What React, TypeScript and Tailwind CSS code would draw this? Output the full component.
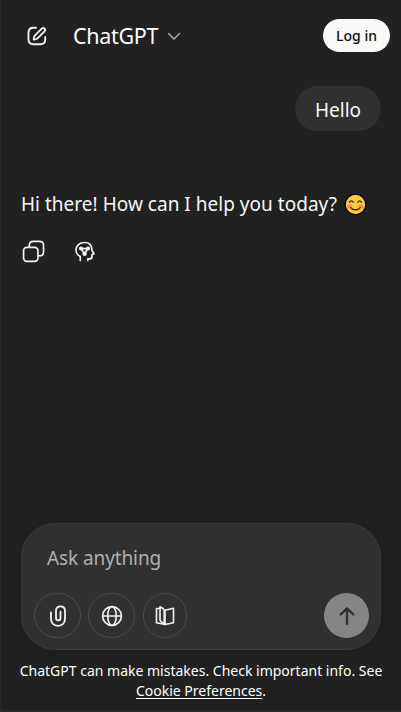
import type { ReactNode } from "react";

function Icon({ children, className, width = 1.6, box = "0 0 24 24" }: { children: ReactNode; className: string; width?: number; box?: string }) {
  return (
    <svg viewBox={box} className={className} fill="none" stroke="currentColor" strokeWidth={width} strokeLinecap="round" strokeLinejoin="round">
      {children}
    </svg>
  );
}

function Header() {
  return (
    <header className="flex h-[71px] items-center pl-[25px] pr-[11px]">
      <button className="text-[#f3f3f3]" aria-label="New chat">
        <Icon className="block size-[22px]" width={2}>
          <path d="M11 3H8.2C5 3 2.700 5 2.700 8.400v7.200C2.700 19 5 21 8.200 21h7.600c3.200 0 5.200-2 5.200-5.200V13" />
          <path d="M9.500 11.600 17.200 3.900a2.100 2.100 0 0 1 3 3l-7.700 7.600c-.9.9-2.200 1.200-4.100 1.300.1-1.900.3-3.300 1.100-4.200Z" />
        </Icon>
      </button>
      <button className="ml-[25px] flex items-center">
        <span className="w-[88px] whitespace-nowrap text-left text-[21.500px] leading-7 tracking-[-0.300px] text-white">ChatGPT</span>
        <Icon className="ml-[5px] block size-[16px] text-[#aaaaaa]" width={1.500} box="0 0 16 16">
          <path d="m2.500 5.500 5.500 5.500 5.500-5.500" />
        </Icon>
      </button>
      <button className="ml-auto h-[33px] w-[67px] rounded-full bg-[#f9f9f9] text-[14px] font-medium tracking-[0px] text-[#0d0d0d]">Log in</button>
    </header>
  );
}

function Smile() {
  return (
    <svg viewBox="0 0 22 22" className="mt-px ml-[7px] block size-[23px]" fill="none" strokeLinecap="round">
      <circle cx="11" cy="11" r="9.900" fill="#ffc83d" stroke="#080808" strokeWidth="1.300" />
      <circle cx="5.500" cy="12.800" r="2" fill="#f58b5b" />
      <circle cx="16.500" cy="12.800" r="2" fill="#f58b5b" />
      <path d="M5.200 8.800c.8-1.700 2.800-1.700 3.600 0M13.200 8.800c.8-1.700 2.800-1.700 3.600 0M6.500 14c2 3 7 3 9 0" stroke="#2b2316" strokeWidth="1.200" />
    </svg>
  );
}

function Conversation() {
  return (
    <main className="flex-1 px-5">
      <div className="mt-[15px] flex justify-end">
        <div className="flex h-[45px] w-[86px] items-center justify-center rounded-full bg-[#303030] pt-[4px] text-[19px] tracking-[0px]">Hello</div>
      </div>
      <div className="mt-[58px] flex h-[30px] items-center">
        <span className="w-[316px] whitespace-nowrap text-[19px] tracking-[0.020px]">Hi there! How can I help you today?</span>
        <Smile />
      </div>
      <div className="mt-[21px] flex items-center text-[#f3f3f3]">
        <button className="pl-px" aria-label="Copy">
          <Icon className="block size-[23px]" width={1.600} box="0 0 22 22">
            <rect x="1.500" y="7" width="13.800" height="13.500" rx="3.200" />
            <path d="M7 6.800V5c0-2.500 1.200-3.700 3.700-3.700h6c2.500 0 3.900 1.400 3.900 3.900v6.200c0 2.500-1.200 3.700-3.700 3.700h-1.500" />
          </Icon>
        </button>
        <button className="ml-[29px]" aria-label="Switch model">
          <Icon className="block size-[22px]" width={1.700} box="0 0 22 22">
            <path d="M6.300 19.500v-4C3.500 14 2 12.200 2 9.500 2 4.700 5.500 1.500 10.500 1.500c4.300 0 7 2.600 7.300 6.500l.2 1.500 2 3.300-2 .8v2.200c0 1.300-.8 2-2.200 2h-2v1.700" />
            <path d="M8 7.600h5.600M7.200 8l3.300 4.500L13.800 8" />
            <circle cx="7" cy="7.500" r="1.200" fill="currentColor" />
            <circle cx="14" cy="7.500" r="1.200" fill="currentColor" />
            <circle cx="10.600" cy="12.800" r="1.400" />
          </Icon>
        </button>
      </div>
    </main>
  );
}

function Composer() {
  const tool = "flex h-[45px] items-center justify-center rounded-full border border-[#4b4b4b] text-[#f3f3f3]";
  return (
    <section className="mx-5 flex h-[127px] flex-col justify-between rounded-[34px] border border-[#3a3a3a] bg-[#303030] pl-[12px] pr-[11px] pt-[19px] pb-[11px] shadow-[0_4px_14px_rgba(0,0,0,0.1)]">
      <div className="pl-[13px] text-[19px] leading-[30px] tracking-[-0.1px] text-[#afafaf]">Ask anything</div>
      <div className="flex items-center">
        <button className={tool + " w-[47px]"} aria-label="Attach">
          <Icon className="block size-[22px]" width={1.800} box="0 0 22 22">
            <path d="M4 7.500v6.300c0 4.300 2.800 7 7 7s7-2.700 7-7V5.900C18 3 16.100 1.300 13.500 1.300S9 3 9 5.900v7.200c0 1.500.8 2.300 2.200 2.300s2.300-.8 2.300-2.300V6.600" />
          </Icon>
        </button>
        <button className={tool + " ml-[7px] w-[47px]"} aria-label="Search">
          <Icon className="block size-[22px]" width={1.700} box="0 0 22 22">
            <circle cx="11" cy="11" r="9.400" />
            <ellipse cx="11" cy="11" rx="4.300" ry="9.400" />
            <path d="M1.700 11h18.600" />
          </Icon>
        </button>
        <button className={tool + " ml-[8px] w-[44px]"} aria-label="Study">
          <Icon className="block size-[22px]" width={1.600} box="0 0 22 22">
            <path d="M6 3.500H2.500v14.300l8.500 1.700 8.500-1.700V3.200L11 5.200v14.300" />
            <path d="m6 1.700 2.700 1.500c1.100.6 1.500 1.500 1.500 2.900v12.500l-2.700-1.600C6.500 16.400 6 15.700 6 14.500Z" />
          </Icon>
        </button>
        <button className="ml-auto flex size-[45px] items-center justify-center rounded-full bg-[#858585] text-[#303030]" aria-label="Send">
          <Icon className="block size-[22px]" width={2.400} box="0 0 22 22">
            <path d="M11 18.800V3.600M4.700 9.500 11 3.400l6.300 6.100" />
          </Icon>
        </button>
      </div>
    </section>
  );
}

export default function App() {
  return (
    <div className="flex h-[712px] w-[401px] flex-col overflow-hidden border-l border-[#292929] bg-[#212121] font-['Noto_Sans','Open_Sans',sans-serif] text-[#f7f7f7]">
      <Header />
      <Conversation />
      <Composer />
      <footer className="h-[60px] pt-[11px] text-center text-[14px] leading-5 tracking-[0px] text-white">
        <div className="whitespace-nowrap">ChatGPT can make mistakes. Check important info. See</div>
        <div><span className="underline underline-offset-2">Cookie Preferences</span>.</div>
      </footer>
      <div className="h-[2px] bg-[#2a2a2a]" />
    </div>
  );
}
